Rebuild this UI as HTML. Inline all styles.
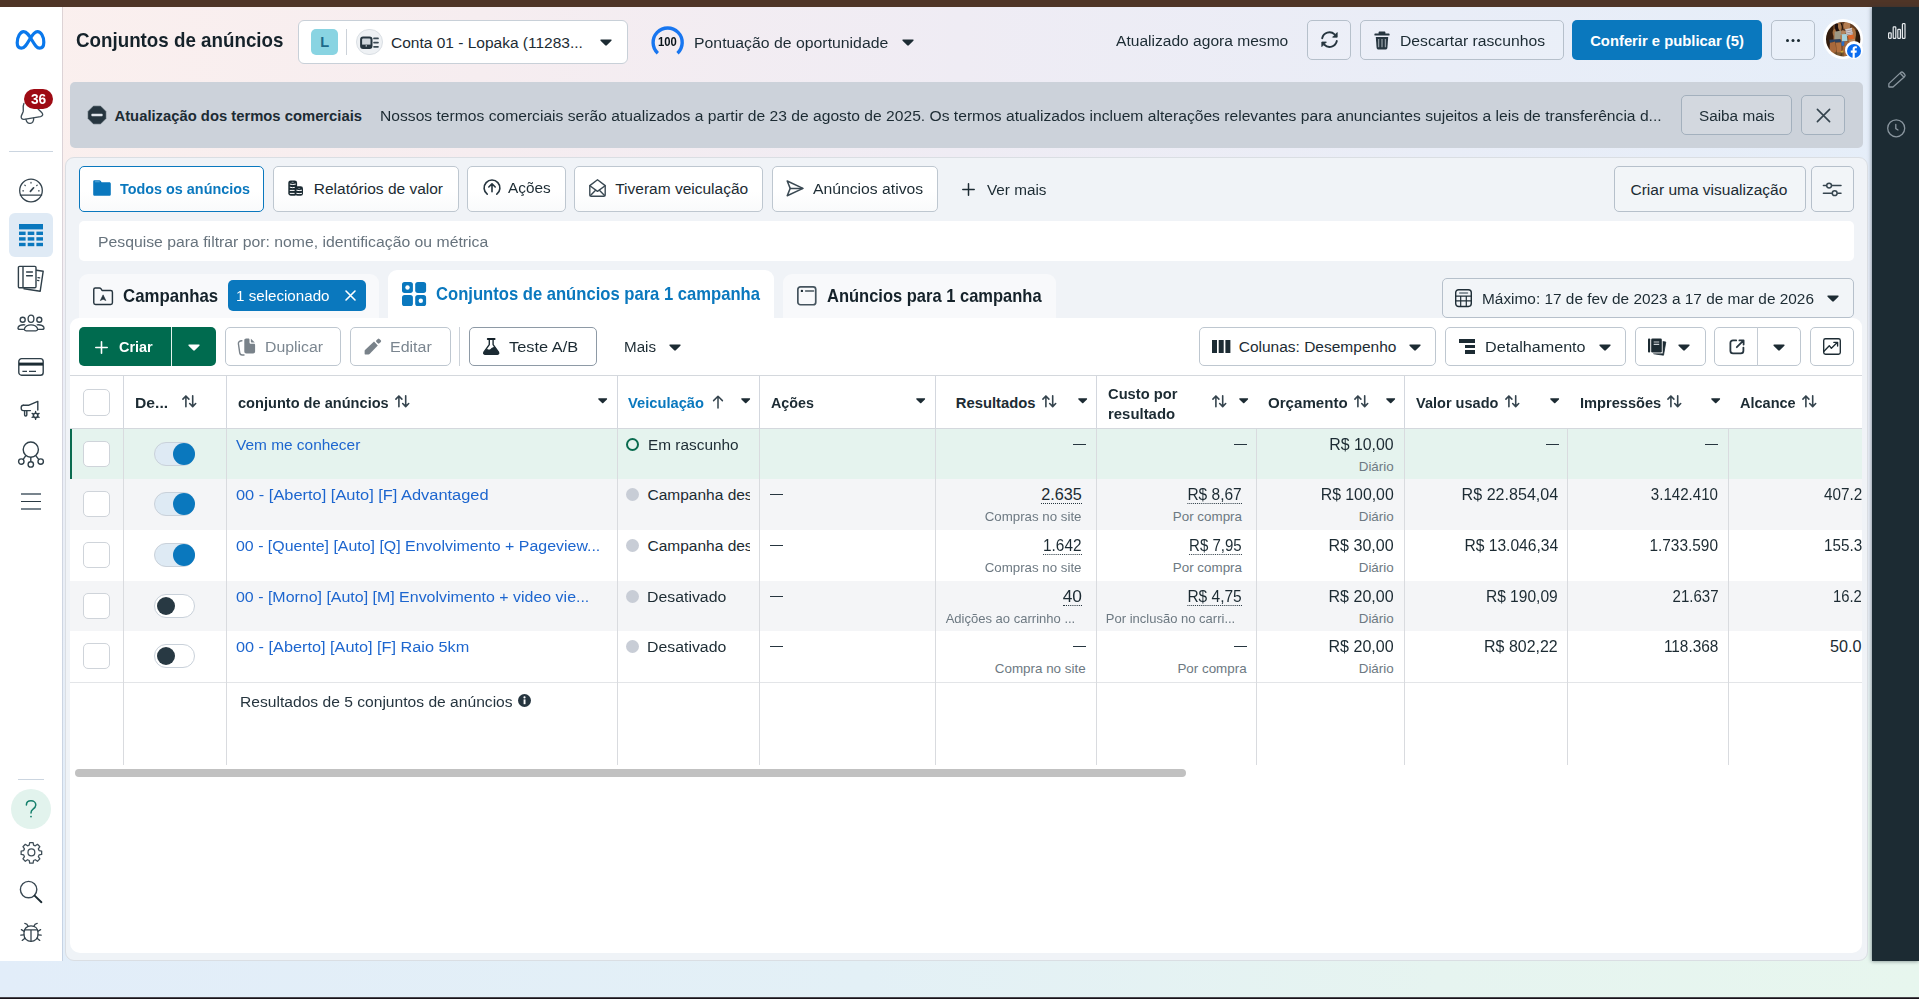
<!DOCTYPE html>
<html lang="pt-BR">
<head>
<meta charset="utf-8">
<title>Conjuntos de anúncios</title>
<style>
*{box-sizing:border-box;margin:0;padding:0}
html,body{width:1919px;height:999px;overflow:hidden}
body{font-family:"Liberation Sans",sans-serif;color:#1c2b33;font-size:15.5px;position:relative;background:#e9eef6}
.abs{position:absolute}
#bgtop{position:absolute;left:0;top:0;width:1919px;height:340px;background:linear-gradient(90deg,#fbf0ee 0%,#f6edf0 25%,#efecf4 50%,#e9edf7 75%,#e5eef9 100%)}
#bgbot{position:absolute;left:0;top:340px;width:1919px;height:659px;background:linear-gradient(90deg,#e2edf9 0%,#e3f0f6 45%,#e6f4f0 75%,#e7f6ee 100%)}
#bgmid{position:absolute;left:0;top:160px;width:1919px;height:640px;background:linear-gradient(180deg,rgba(233,238,246,0) 0%,#ebeef7 30%,#e9eef6 70%,rgba(233,238,246,0) 100%)}
#topbar{position:absolute;left:0;top:0;width:1919px;height:7px;background:#4f3527}
#botline{position:absolute;left:0;top:997px;width:1919px;height:2px;background:linear-gradient(180deg,#6b6a70 0%,#18131a 60%)}
#side{position:absolute;left:0;top:7px;width:62px;height:954px;background:#fff}
#sideb{position:absolute;left:62px;top:7px;width:1px;height:954px;background:linear-gradient(180deg,#ddd3d5 0%,#d9d3da 30%,#cfd6e2 60%,#c6d3e4 100%)}
#rpanel{position:absolute;left:1872px;top:7px;width:47px;height:954px;background:#1c2b33;box-shadow:-1px 0 4px rgba(40,60,80,.35),0 1px 3px rgba(0,0,0,.18)}
.t{position:absolute;white-space:nowrap;line-height:1}
.b{font-weight:700}
.btn{position:absolute;border:1px solid #b6c0cb;border-radius:5px;background:rgba(255,255,255,.12)}
.btnw{position:absolute;border:1px solid #bec7d0;border-radius:5px;background:#fff}
svg{position:absolute;overflow:visible}
.vl{position:absolute;width:1px;background:#d9dce0}
.cb{position:absolute;width:27px;height:27px;border:1px solid #cfd4da;border-radius:5px;background:#fff}
</style>
</head>
<body>
<div id="bgtop"></div><div id="bgbot"></div><div id="bgmid"></div>
<div id="topbar"></div>
<div id="side"></div><div id="sideb"></div>
<div id="rpanel"></div>
<div id="botline"></div>
<!-- SIDEBAR ICONS -->
<div id="sideicons">
<svg style="left:14px;top:29px" width="33" height="22" viewBox="0 0 33 22"><path d="M3.2 13.8 C3.2 8 6.2 2.6 9.6 2.6 C13.2 2.6 15.6 7.2 18.6 12.2 C21 16.2 22.8 19.2 25.6 19.2 C28.4 19.2 29.8 16.8 29.8 13.2 C29.8 7.6 27 2.6 23.4 2.6 C20.4 2.6 18.2 6 15.4 10.8 C12.6 15.6 10.6 19.2 7.4 19.2 C4.6 19.2 3.2 17 3.2 13.8 Z" fill="none" stroke="#0a78ec" stroke-width="3.2" stroke-linejoin="round"/></svg>
<!-- bell -->
<svg style="left:20px;top:100px" width="24" height="24" viewBox="0 0 24 24" fill="none" stroke="#3d4c56" stroke-width="1.35" stroke-linejoin="round" stroke-linecap="round"><path d="M3.9 3.5 C2.6 6.5 3.6 9 3.2 11.4 C2.8 13.4 1.4 15 1.2 16.6 C1 18.6 2.4 19.6 4 19.4 L20.6 16.6 C22.6 16.2 23.2 14.6 22.2 13.2 C20.8 11.4 19 10 17.6 8.6"/><path d="M5.9 19.4 C6.6 22 8.4 23.6 10.2 23.4 C12.4 23.2 14 21.2 13.6 18.2"/></svg>
<div class="abs" style="left:24px;top:89px;width:29px;height:20px;border-radius:10px;background:#9e0b14"></div>
<div class="t" style="top:92px;font-size:14.3px;color:#fff;font-weight:700;left:30.52px;transform:scaleX(0.9556);transform-origin:0 0;">36</div>
<div class="abs" style="left:9px;top:151px;width:44px;height:1px;background:#cbd5e0"></div>
<!-- gauge -->
<svg style="left:19px;top:178px" width="24" height="25" viewBox="0 0 24 25" fill="none" stroke="#34434d" stroke-width="1.3" stroke-linecap="round"><circle cx="12" cy="12.5" r="11.3"/><path d="M1.4 17.2 H22.6"/><path d="M11.4 13.4 L14.6 9.8" stroke-width="1.7"/><path d="M12 4.4v.7M5.8 7.2l.5.5M18.2 7.2l-.5.5M3.8 12.8h.7M19.5 12.8h.7" stroke-width="1.2"/></svg>
<!-- active table -->
<div class="abs" style="left:9px;top:213px;width:44px;height:44px;border-radius:6px;background:#dfeaf5"></div>
<svg style="left:19px;top:224px" width="24" height="23" viewBox="0 0 24 23" fill="#0a78be"><rect x="0" y="0" width="24" height="5.4"/><rect x="0" y="7.6" width="6.6" height="3.4"/><rect x="8.7" y="7.6" width="6.6" height="3.4"/><rect x="17.4" y="7.6" width="6.6" height="3.4"/><rect x="0" y="13.2" width="6.6" height="3.4"/><rect x="8.7" y="13.2" width="6.6" height="3.4"/><rect x="17.4" y="13.2" width="6.6" height="3.4"/><rect x="0" y="18.8" width="6.6" height="3.4"/><rect x="8.7" y="18.8" width="6.6" height="3.4"/><rect x="17.4" y="18.8" width="6.6" height="3.4"/></svg>
<!-- pages -->
<svg style="left:17px;top:265px" width="28" height="28" viewBox="0 0 28 28" fill="none" stroke="#2f3f49" stroke-width="1.4" stroke-linejoin="round" stroke-linecap="round"><path d="M19.5 5.2 L26.2 6.2 L23.2 26.2 L7 23.8"/><rect x="1.4" y="1.4" width="17.6" height="21.4" rx="1.2"/><path d="M6 1.6V22.6"/><path d="M9.6 7H15.4M9.6 10.8H15.4"/><path d="M21 12.6l1.6.3M20.6 15.4l1.2.2"/></svg>
<!-- people -->
<svg style="left:17px;top:313.8px" width="28" height="18" viewBox="0 0 28 18" fill="none" stroke="#34434d" stroke-width="1.35" stroke-linejoin="round" stroke-linecap="round"><ellipse cx="14" cy="4.7" rx="2.9" ry="3.6"/><circle cx="5.7" cy="5.7" r="2.5"/><circle cx="22.3" cy="5.7" r="2.5"/><path d="M9.2 16.8 C7.6 16.8 7 15.6 7.6 14.2 C8.6 11.8 11.2 10.8 14 10.8 C16.8 10.8 19.4 11.8 20.4 14.2 C21 15.6 20.4 16.8 18.8 16.8 Z"/><path d="M6.4 15.4 H2.8 C1.2 15.4 .6 14.4 1.2 13.2 C2.2 11.4 4.4 10.6 7.8 10.8"/><path d="M21.6 15.4 H25.2 C26.8 15.4 27.4 14.4 26.8 13.2 C25.8 11.4 23.6 10.6 20.2 10.8"/></svg>
<!-- card -->
<svg style="left:18px;top:357px" width="26" height="20" viewBox="0 0 26 20" fill="none" stroke="#2f3f49" stroke-width="1.4"><rect x=".8" y="1.6" width="24.4" height="16.6" rx="2.8"/><rect x="1" y="5.6" width="24" height="3" fill="#1c2b33" stroke="none"/><path d="M4.4 14.4H9M11 14.4H18" stroke-width="1.3"/></svg>
<!-- megaphone -->
<svg style="left:20px;top:399px" width="22" height="22" viewBox="0 0 22 22" fill="none" stroke="#2f3f49" stroke-width="1.4" stroke-linejoin="round" stroke-linecap="round"><path d="M3.4 6.2 L9 6.2 L17.8 2.4 L17.8 11"/><path d="M10.4 11.6 L3.4 11.6 C1.6 11.6 1.2 10.4 1.2 8.9 C1.2 7.4 1.6 6.2 3.4 6.2"/><path d="M4.6 11.8 L4.6 16 C4.6 17.4 6.8 17.4 6.8 16 L6.8 11.8"/><circle cx="15.6" cy="16.4" r="2.2" stroke-width="1.6"/><path d="M15.6 12.4v1.4M15.6 19v1.4M12.1 14.4l1.2.7M17.9 17.7l1.2.7M12.1 18.4l1.2-.7M17.9 15.1l1.2-.7" stroke-width="1.3"/></svg>
<!-- network -->
<svg style="left:17px;top:440px" width="28" height="30" viewBox="0 0 28 30" fill="none" stroke="#2f3f49" stroke-width="1.4"><circle cx="13.8" cy="9.6" r="7.6"/><circle cx="4.3" cy="21.6" r="2.7"/><circle cx="13.8" cy="24.4" r="2.7"/><circle cx="23.7" cy="21.6" r="2.7"/><path d="M8.8 15.6 L6.2 19.4M13.8 17.2V21.6M18.8 15.6L21.6 19.4"/></svg>
<!-- hamburger -->
<div class="abs" style="left:21px;top:493px;width:20px;height:2px;background:#78848d"></div>
<div class="abs" style="left:21px;top:501px;width:20px;height:1px;background:#2a3943"></div>
<div class="abs" style="left:21px;top:508px;width:20px;height:2px;background:#78848d"></div>
<!-- bottom -->
<div class="abs" style="left:18px;top:779px;width:26px;height:1px;background:#cbd5e0"></div>
<div class="abs" style="left:11px;top:789px;width:40px;height:40px;border-radius:20px;background:#e2f3ed"></div>
<svg style="left:11px;top:789px" width="40" height="40" viewBox="0 0 40 40" fill="none" stroke="#15806c" stroke-width="1.5" stroke-linecap="round"><path d="M15.4 16 C15.4 13.4 17.4 11.8 20 11.8 C22.8 11.8 24.8 13.6 24.8 16 C24.8 18.2 23.4 19.2 21.8 20.3 C20.4 21.3 20 22.2 20 24"/><circle cx="20" cy="27.6" r=".9" fill="#15806c" stroke="none"/></svg>
<!-- gear -->
<svg style="left:19.6px;top:841.4px" width="22.8" height="22.8" viewBox="0 0 24 24" fill="none" stroke="#3f4e58" stroke-width="1.35" stroke-linejoin="round"><circle cx="12" cy="12" r="3.6"/><path d="M10.2 1.6h3.6l.5 2.7 1.8.8 2.3-1.6 2.5 2.5-1.6 2.3.8 1.8 2.7.5v3.6l-2.7.5-.8 1.8 1.6 2.3-2.5 2.5-2.3-1.6-1.8.8-.5 2.7h-3.6l-.5-2.7-1.8-.8-2.3 1.6-2.5-2.5 1.6-2.3-.8-1.8-2.7-.5v-3.6l2.7-.5.8-1.8-1.6-2.3 2.5-2.5 2.3 1.6 1.8-.8z"/></svg>
<!-- search -->
<svg style="left:19px;top:880px" width="24" height="24" viewBox="0 0 24 24" fill="none" stroke="#3a4953" stroke-width="1.4" stroke-linecap="round"><circle cx="9.6" cy="9.6" r="8.2"/><path d="M15.6 15.6L22.4 22.2" stroke="#1c2b33" stroke-width="1.9"/></svg>
<!-- bug -->
<svg style="left:20px;top:921px" width="22" height="22" viewBox="0 0 22 22" fill="none" stroke="#34434d" stroke-width="1.3" stroke-linecap="round" stroke-linejoin="round"><path d="M4 11.8 C4 7.6 6.9 4.8 11 4.8 C15.1 4.8 18 7.6 18 11.8 L18 13.4 C18 17.4 15.1 20.4 11 20.4 C6.9 20.4 4 17.4 4 13.4Z"/><path d="M4.6 8.8H17.4M11 8.8V20.2"/><path d="M8 5.2 C7.6 3.6 6.4 2.6 4.8 2.4M14 5.2 C14.4 3.6 15.6 2.6 17.2 2.4M3.9 10.2L1.4 8.6M3.9 13.8L.8 14.2M4.9 17.2L2.2 19.4M18.1 10.2l2.5-1.6M18.1 13.8l3.1.4M17.1 17.2l2.7 2.2"/></svg>
</div>

<!-- RIGHT PANEL ICONS -->
<div id="ricons">
<svg style="left:1888px;top:23px" width="18" height="16" viewBox="0 0 18 16" fill="none" stroke="#e6eaed" stroke-width="1.2"><rect x=".6" y="9.8" width="2.6" height="5.6" rx=".7"/><rect x="5.2" y="3.8" width="2.6" height="11.6" rx=".7"/><rect x="9.8" y="6.4" width="2.6" height="9" rx=".7"/><rect x="14.4" y=".6" width="2.6" height="14.8" rx=".7"/></svg>
<svg style="left:1887.5px;top:70.5px" width="18" height="17" viewBox="0 0 18 17" fill="none" stroke="#8a969f" stroke-width="1.3" stroke-linejoin="round"><path d="M.9 12.6 L12.6 1.6 C13.4 .9 14.4 .9 15.2 1.7 L16.6 3.2 C17.3 4 17.3 5 16.5 5.7 L5 16 H1.4 C1 16 .8 15.8 .8 15.4Z"/><path d="M12.2 2.2L16 6.2"/></svg>
<svg style="left:1887px;top:119px" width="19" height="19" viewBox="0 0 19 19" fill="none" stroke="#8a969f" stroke-width="1.3" stroke-linecap="round"><circle cx="9.2" cy="9.3" r="8.5"/><path d="M8.8 5.4V9.6L11 11"/></svg>
</div>

<!-- HEADER -->
<div id="header">
<div class="t" style="top:29px;font-size:21px;color:#15222a;font-weight:700;left:76.05px;transform:scaleX(0.8937);transform-origin:0 0;">Conjuntos de anúncios</div>
<div class="btnw" style="left:298px;top:20px;width:330px;height:44px;border-color:#c8d0d8;border-radius:6px"></div>
<div class="abs" style="left:311px;top:29px;width:27px;height:26px;border-radius:5px;background:#89d4e2"></div>
<div class="t" style="top:35px;font-size:14.6px;color:#1d6a8a;font-weight:700;left:320.20px;">L</div>
<div class="abs" style="left:346px;top:29px;width:1px;height:26px;background:#ccd2d9"></div>
<div class="abs" style="left:356px;top:29px;width:27px;height:26px;border-radius:13px;background:#eef1f4;border:1px solid #dadfe4"></div>
<svg style="left:360px;top:36px" width="19" height="14" viewBox="0 0 19 14"><rect x="1.1" y="1.4" width="10.4" height="10.6" rx="2" fill="#cfd6dc" stroke="#26353f" stroke-width="2"/><rect x="1.4" y="8.6" width="9.8" height="2.6" fill="#26353f"/><rect x="5.6" y="9.3" width="1.4" height="1.2" fill="#cfd6dc"/><path d="M14 2.4H18M14 6.6H18M14 10.8H18" stroke="#3a4953" stroke-width="1.7" stroke-linecap="round"/></svg>
<div class="t" style="top:35px;font-size:15.5px;color:#1c2b33;left:391.00px;">Conta 01 - Lopaka (11283...</div><svg style="left:599.5px;top:39.0px" width="12" height="7" viewBox="0 0 12 7"><path d="M1.2 0.4 H10.8 C11.6 0.4 11.9 1.1 11.4 1.7 L6.8 6.3 C6.4 6.8 5.6 6.8 5.2 6.3 L0.6 1.7 C0.1 1.1 0.4 0.4 1.2 0.4Z" fill="#1c2b33"/></svg>
<svg style="left:651px;top:26.3px" width="34" height="32" viewBox="0 0 34 32"><path d="M6.8 27.2 A14.55 14.55 0 1 1 26.5 27.2" fill="none" stroke="#1876f0" stroke-width="3.4"/></svg>
<div class="t" style="top:36px;font-size:12.6px;color:#0a141a;font-weight:700;left:658.15px;transform:scaleX(0.8946);transform-origin:0 0;">100</div><div class="t" style="top:35px;font-size:15.5px;color:#1c2b33;left:694.49px;transform:scaleX(1.0201);transform-origin:0 0;">Pontuação de oportunidade</div><svg style="left:902.3px;top:39.0px" width="12" height="7" viewBox="0 0 12 7"><path d="M1.2 0.4 H10.8 C11.6 0.4 11.9 1.1 11.4 1.7 L6.8 6.3 C6.4 6.8 5.6 6.8 5.2 6.3 L0.6 1.7 C0.1 1.1 0.4 0.4 1.2 0.4Z" fill="#1c2b33"/></svg><div class="t" style="top:33px;font-size:15.5px;color:#1c2b33;left:1116.20px;transform:scaleX(1.0048);transform-origin:0 0;">Atualizado agora mesmo</div>
<div class="btn" style="left:1307px;top:20.3px;width:44px;height:39.7px"></div>
<svg style="left:1320px;top:30.2px" width="19" height="19" viewBox="0 0 19 19"><g fill="none" stroke="#26353f" stroke-width="1.9" stroke-linecap="round"><path d="M2.2 8.2 A7.4 7.4 0 0 1 14.6 4.4"/><path d="M16.8 11 A7.4 7.4 0 0 1 4.4 14.8"/></g><path d="M17.2 2.6 V7.2 H12.6 Z" fill="#26353f" stroke="#26353f" stroke-width=".8" stroke-linejoin="round"/><path d="M1.8 16.6 V12 H6.4 Z" fill="#26353f" stroke="#26353f" stroke-width=".8" stroke-linejoin="round"/></svg>
<div class="btn" style="left:1360px;top:20.3px;width:204px;height:39.7px"></div>
<svg style="left:1374px;top:31px" width="16" height="19" viewBox="0 0 16 19"><path d="M5.6 0.6 H10.4 C11 0.6 11.4 1 11.4 1.6 V2.4 H14.6 C15.2 2.4 15.6 2.8 15.6 3.4 V4 C15.6 4.4 15.3 4.6 15 4.6 H1 C.7 4.6 .4 4.4 .4 4 V3.4 C.4 2.8 .8 2.4 1.4 2.4 H4.6 V1.6 C4.6 1 5 .6 5.6 .6Z" fill="#26353f"/><path d="M1.8 6 H14.2 L13.4 16.8 C13.3 17.9 12.5 18.6 11.4 18.6 H4.6 C3.5 18.6 2.7 17.9 2.6 16.8Z" fill="#26353f"/><path d="M4.6 8V16.2M8 8V16.2M11.4 8V16.2" stroke="#909aa2" stroke-width="1.3"/></svg>
<div class="t" style="top:33px;font-size:15.5px;color:#1c2b33;left:1400.19px;transform:scaleX(1.0139);transform-origin:0 0;">Descartar rascunhos</div>
<div class="abs" style="left:1572px;top:20.3px;width:190px;height:39.7px;border-radius:5px;background:#0a78be"></div>
<div class="t" style="top:34px;font-size:14.8px;color:#fff;font-weight:700;left:1590.20px;">Conferir e publicar (5)</div>
<div class="btn" style="left:1771px;top:20.3px;width:43.5px;height:39.7px"></div>
<div class="abs" style="left:1786px;top:39px;width:3px;height:3px;border-radius:2px;background:#1c2b33;box-shadow:5.5px 0 0 #1c2b33,11px 0 0 #1c2b33"></div>
<!-- avatar -->
<div class="abs" style="left:1823.3px;top:19.3px;width:39.4px;height:39.4px;border-radius:20px;background:#fff"></div>
<svg style="left:1825.8px;top:21.8px" width="34.4" height="34.4" viewBox="0 0 34 34">
<defs><filter id="avb" x="-10%" y="-10%" width="120%" height="120%"><feGaussianBlur stdDeviation=".45"/></filter><clipPath id="avc"><circle cx="17" cy="17" r="17"/></clipPath>
<radialGradient id="avg" cx="50%" cy="45%" r="60%"><stop offset="0" stop-color="#9a6238"/><stop offset=".6" stop-color="#6a4022"/><stop offset="1" stop-color="#24160c"/></radialGradient></defs>
<g clip-path="url(#avc)"><g filter="url(#avb)">
<rect x="-2" y="-2" width="38" height="38" fill="url(#avg)"/>
<rect x="0" y="0" width="7" height="34" fill="#2a190d" opacity=".85"/>
<rect x="29" y="8" width="5" height="14" fill="#1d120a" opacity=".8"/>
<!-- left person -->
<path d="M8 14 C6 12 6 9 8 7 L15 6 L16 12 L15 19 L8 19Z" fill="#a56f43"/>
<ellipse cx="12.4" cy="4.5" rx="3.2" ry="3.6" fill="#a8744a"/>
<path d="M9 1 C8 5 9.5 9 11 10.5 L14.5 9.5 C12 8 11.5 5 12 2 Z" fill="#1c110a"/>
<path d="M14.5 1.5 C16 4 16 7 15 9.5 L16.5 8 C17 5 16.5 3 15.5 1Z" fill="#1c110a"/>
<path d="M8.6 9.6 L15 8.4 L15.6 16.6 L8.4 17.4 Z" fill="#9d9885"/>
<path d="M3.4 17.6 L14.6 16.8 L15 20 L9.4 20.4 L8.8 19.4 L3.8 21Z" fill="#2c4262"/>
<path d="M4 20.6 L8.8 19.6 L10.2 27 L9 34 L4.4 33 C3.4 28 3.4 24 4 20.6Z" fill="#a8683a"/>
<path d="M9.6 20.6 L14.6 20.2 L15.4 27 L14 34 L10.4 34 C10.8 29 10.4 24 9.6 20.6Z" fill="#b2713f"/>
<!-- right person -->
<ellipse cx="20.6" cy="3.6" rx="3.4" ry="3.6" fill="#b47c4f"/>
<path d="M18.4 7.4 L25.6 5.6 L27 12.4 L20.6 13.6Z" fill="#d8d2d2"/>
<path d="M19 9.2 L26 7.6 M19.6 11 L26.4 9.6 M20.2 12.6 L26.8 11.4" stroke="#8e7f86" stroke-width=".7"/>
<path d="M25.4 5.2 C28.4 6 30 9 29.6 13 L28.6 18.4 L26 17.6 L26.8 12Z" fill="#a9703f"/>
<path d="M21.6 13.4 L27.2 12.4 L27.6 16.6 L22.4 17.6Z" fill="#dc6326"/>
<path d="M22 17.6 L28.6 16.6 L29 19 L23 20.4Z" fill="#b98a62"/>
<!-- child -->
<ellipse cx="17.2" cy="9.6" rx="2.3" ry="2.5" fill="#b4835c"/>
<path d="M15 8.6 C15.2 6.8 19 6.6 19.4 8.8 C18 8 16.4 8 15 8.6Z" fill="#2a1a10"/>
<path d="M15.4 12.2 L20.4 11.8 L21.2 18.8 L15.8 19.2Z" fill="#a6d2dc"/>
<path d="M14 13.4 L15.6 12.6 L15.8 17.4 L14.4 17.2Z" fill="#b27a4c"/>
<path d="M15.2 19.2 L18.4 19 L18.2 23.6 L15.4 23.6Z" fill="#2c6ec6"/>
<path d="M18.4 19.4 L23.6 19.6 L20.4 34 L16 34 L16.6 24 L18.2 23.6Z" fill="#a86a3c"/>
<path d="M14.6 28.6 L17 28.2 L17 30.6 L14.8 30.8Z" fill="#c8a238"/>
<rect x="8" y="30" width="10" height="4" fill="#5a4a2c" opacity=".6"/>
</g></g></svg>
<div class="abs" style="left:1845px;top:41px;width:18px;height:18px;border-radius:9px;background:#fff"></div>
<svg style="left:1847.1px;top:43.6px" width="14" height="14" viewBox="0 0 14 14"><circle cx="7" cy="7" r="7" fill="#0a6cf0"/><path d="M7.75 14V8.7h1.75l.3-2.1H7.75V5.3c0-.65.3-1.05 1.1-1.05h1.05V2.4C9.6 2.3 8.95 2.2 8.3 2.2 6.65 2.2 5.6 3.2 5.6 5v1.6H3.8v2.1h1.8V14z" fill="#fff"/></svg>
</div>

<!-- BANNER -->
<div id="banner" class="abs" style="left:70px;top:82px;width:1793px;height:66px;background:#ccd2da;border-radius:5px"></div>
<svg style="left:88px;top:106px" width="18" height="18" viewBox="0 0 18 18"><path d="M5.4 0.2 H12.6 L17.8 5.4 V12.6 L12.6 17.8 H5.4 L0.2 12.6 V5.4Z" fill="#26353f" stroke="#26353f" stroke-width=".6" stroke-linejoin="round"/><rect x="3.4" y="7.8" width="11.2" height="2.4" rx=".6" fill="#dfe4ea"/></svg>
<div class="t" style="top:109px;font-size:14.8px;color:#1c2b33;font-weight:700;left:114.50px;">Atualização dos termos comerciais</div><div class="t" style="top:108px;font-size:15.5px;color:#1c2b33;left:379.50px;transform:scaleX(1.0092);transform-origin:0 0;">Nossos termos comerciais serão atualizados a partir de 23 de agosto de 2025. Os termos atualizados incluem alterações relevantes para anunciantes sujeitos a leis de transferência d...</div>
<div class="btn" style="left:1681.3px;top:95px;width:110.4px;height:39.6px;border-color:#a3b0bd;background:rgba(255,255,255,.14)"></div>
<div class="t" style="top:108px;font-size:15.5px;color:#1c2b33;left:1698.81px;transform:scaleX(0.9871);transform-origin:0 0;">Saiba mais</div>
<div class="btn" style="left:1801.2px;top:95px;width:43.8px;height:39.6px;border-color:#a3b0bd;background:rgba(255,255,255,.14)"></div>
<svg style="left:1815.6px;top:107.6px" width="15" height="15" viewBox="0 0 15 15" stroke="#34434d" stroke-width="1.6" stroke-linecap="round"><path d="M1.4 1.4L13.6 13.6M13.6 1.4L1.4 13.6"/></svg>

<!-- CARD -->
<div id="card" class="abs" style="left:65px;top:157px;width:1803px;height:804px;background:rgba(239,243,247,.97);border:1px solid #dadee3;border-radius:9px"></div>
<!-- view tabs -->
<div class="btnw" style="left:79px;top:166px;width:185px;height:45.6px;border-color:#0a78be;border-radius:5px;background:linear-gradient(180deg,#fff 55%,#f9fafb 100%)"></div>
<svg style="left:93px;top:180px" width="18" height="16" viewBox="0 0 18 16"><path d="M1.6 0.2 H6.4 C7 0.2 7.4 0.4 7.8 0.9 L8.6 2.2 H16.2 C17.2 2.2 17.8 2.8 17.8 3.8 V14.2 C17.8 15.2 17.2 15.8 16.2 15.8 H1.8 C.8 15.8 .2 15.2 .2 14.2 V1.6 C.2 .7 .8 .2 1.6 .2Z" fill="#0a78be"/><rect x="1.8" y="1.2" width="5" height="1.1" rx=".5" fill="#5aa6d6"/></svg>
<div class="t" style="top:182px;font-size:14.8px;color:#0a78be;font-weight:700;left:119.51px;transform:scaleX(0.9721);transform-origin:0 0;">Todos os anúncios</div>
<div class="btnw" style="left:273px;top:166px;width:186px;height:45.6px;background:linear-gradient(180deg,#fff 55%,#f9fafb 100%)"></div>
<svg style="left:288px;top:180px" width="16" height="16" viewBox="0 0 16 16"><rect x=".3" y=".4" width="8.8" height="15.3" rx="2.4" fill="#1c2b33"/><rect x="7.2" y="6.3" width="7.8" height="9.4" rx="2.3" fill="#1c2b33"/><g stroke="#fff" stroke-width="1" stroke-linecap="round" fill="none"><path d="M2.2 4.2 Q4.7 5 7.4 4.2"/><path d="M2.2 7.3 Q4.2 8 6.4 7.5"/><path d="M2.2 10.4 H6.2"/><path d="M2.2 13.4 H6.2"/><path d="M8.8 10.3 Q11.1 11 13.6 10.3"/><path d="M8.8 13.4 Q11.1 13.9 13.6 13.4"/></g><ellipse cx="4.7" cy="2.3" rx="1.5" ry=".45" fill="#9aa5ad"/><ellipse cx="11.1" cy="8.4" rx="1.3" ry=".4" fill="#9aa5ad"/></svg>
<div class="t" style="top:181px;font-size:15.5px;color:#1c2b33;left:313.80px;">Relatórios de valor</div>
<div class="btnw" style="left:467px;top:166px;width:98.5px;height:45.6px;background:linear-gradient(180deg,#fff 55%,#f9fafb 100%)"></div>
<svg style="left:483px;top:179px" width="18" height="17" viewBox="0 0 18 17" fill="none" stroke="#26353f" stroke-width="1.6" stroke-linecap="round" stroke-linejoin="round"><path d="M4.2 15.2 A7.9 7.9 0 1 1 13.8 15.2"/><path d="M9 12.8V5M5.8 8L9 4.8L12.2 8"/></svg>
<div class="t" style="top:180px;font-size:15.5px;color:#1c2b33;left:507.80px;transform:scaleX(0.9909);transform-origin:0 0;">Ações</div>
<div class="btnw" style="left:574px;top:166px;width:188.5px;height:45.6px;background:linear-gradient(180deg,#fff 55%,#f9fafb 100%)"></div>
<svg style="left:589px;top:179px" width="17" height="18" viewBox="0 0 17 18" fill="none" stroke="#3a4953" stroke-width="1.4" stroke-linejoin="round" stroke-linecap="round"><path d="M.8 6.6 L8.5 .8 L16.2 6.6 V15.8 C16.2 16.8 15.8 17.2 14.8 17.2 H2.2 C1.2 17.2 .8 16.8 .8 15.8Z"/><path d="M.9 6.8 L8.5 12.4 L16.1 6.8"/><path d="M1.2 16.8 L6.6 11.2M15.8 16.8 L10.4 11.2"/></svg>
<div class="t" style="top:181px;font-size:15.5px;color:#1c2b33;left:615.20px;">Tiveram veiculação</div>
<div class="btnw" style="left:772px;top:166px;width:165.5px;height:45.6px;background:linear-gradient(180deg,#fff 55%,#f9fafb 100%)"></div>
<svg style="left:786px;top:180px" width="18" height="17" viewBox="0 0 18 17" fill="none" stroke="#3a4953" stroke-width="1.5" stroke-linejoin="round" stroke-linecap="round"><path d="M1.2 1 L17 8.4 L1.2 15.8 L4.2 8.4Z"/><path d="M4.4 8.4H16.4"/></svg>
<div class="t" style="top:181px;font-size:15.5px;color:#1c2b33;left:812.79px;transform:scaleX(1.0151);transform-origin:0 0;">Anúncios ativos</div>
<svg style="left:962px;top:183px" width="13" height="13" viewBox="0 0 13 13" stroke="#1c2b33" stroke-width="1.5" stroke-linecap="round"><path d="M6.5 .8V12.2M.8 6.5H12.2"/></svg>
<div class="t" style="top:182px;font-size:15.5px;color:#1c2b33;left:986.81px;transform:scaleX(0.9865);transform-origin:0 0;">Ver mais</div>
<div class="btn" style="left:1613.5px;top:166px;width:192.5px;height:46px;background:rgba(255,255,255,.18)"></div>
<div class="t" style="top:182px;font-size:15.5px;color:#1c2b33;left:1630.50px;">Criar uma visualização</div>
<div class="btn" style="left:1811px;top:166px;width:43px;height:46px;background:rgba(255,255,255,.18)"></div>
<svg style="left:1823px;top:181px" width="19" height="16" viewBox="0 0 19 16" fill="none" stroke="#36454f" stroke-width="1.5" stroke-linecap="round"><path d="M.4 4.6H3M9.2 4.6H18M.4 12.2H8.6M14.8 12.2H18"/><circle cx="6.1" cy="4.6" r="2.4"/><circle cx="11.7" cy="12.2" r="2.4"/></svg>
<!-- search -->
<div class="abs" style="left:79px;top:221px;width:1775px;height:40px;background:#fff;border-radius:5px"></div>
<div class="t" style="top:234px;font-size:15.5px;color:#67737d;left:97.79px;transform:scaleX(1.0178);transform-origin:0 0;">Pesquise para filtrar por: nome, identificação ou métrica</div>
<!-- level tabs -->
<div class="abs" style="left:79px;top:274px;width:299.5px;height:46px;background:#f8f9fb;border-radius:9px 9px 0 0"></div>
<svg style="left:92.6px;top:286.6px" width="20.2" height="18.6" viewBox="0 0 21 19" fill="none" stroke="#26353f" stroke-width="1.5" stroke-linejoin="round"><path d="M2.4 .8 H6.6 C7.4 .8 7.8 1 8.2 1.6 L9.4 3.4 H18.4 C19.6 3.4 20.2 4 20.2 5.2 V16.2 C20.2 17.4 19.6 18 18.4 18 H2.6 C1.4 18 .8 17.4 .8 16.2 V2.4 C.8 1.4 1.4 .8 2.4 .8Z"/><path d="M10.5 8 L13.4 14 L10.5 12.6 L7.6 14Z" fill="#26353f" stroke-width=".6"/></svg>
<div class="t" style="top:288px;font-size:17.8px;color:#15222a;font-weight:700;left:123.33px;transform:scaleX(0.9445);transform-origin:0 0;">Campanhas</div>
<div class="abs" style="left:228px;top:280px;width:138px;height:31px;border-radius:5px;background:#0a78be"></div>
<div class="t" style="top:288px;font-size:15.5px;color:#fff;left:236.21px;transform:scaleX(0.9773);transform-origin:0 0;">1 selecionado</div>
<svg style="left:345px;top:290px" width="11" height="11" viewBox="0 0 11 11" stroke="#fff" stroke-width="1.6" stroke-linecap="round"><path d="M1 1L10 10M10 1L1 10"/></svg>
<div class="abs" style="left:388px;top:270px;width:386px;height:50px;background:#fff;border-radius:9px 9px 0 0"></div>
<svg style="left:402px;top:282px" width="25" height="25" viewBox="0 0 25 25"><rect x="0" y="0" width="10.9" height="10.9" rx="2.6" fill="#0a78be"/><circle cx="5.5" cy="5.5" r="2.2" fill="#fff"/><rect x="13.2" y="0" width="10.9" height="10.9" rx="2.6" fill="#0a78be"/><rect x="0" y="13.1" width="10.9" height="10.9" rx="2.6" fill="#0a78be"/><rect x="13.2" y="13.1" width="10.9" height="10.9" rx="2.6" fill="#0a78be"/><circle cx="18.8" cy="18.8" r="2.2" fill="#fff"/></svg>
<div class="t" style="top:286px;font-size:17.8px;color:#0a78be;font-weight:700;left:436.23px;transform:scaleX(0.9342);transform-origin:0 0;">Conjuntos de anúncios para 1 campanha</div>
<div class="abs" style="left:782.5px;top:274px;width:273.5px;height:46px;background:#f8f9fb;border-radius:9px 9px 0 0"></div>
<svg style="left:797.2px;top:286.2px" width="20" height="20" viewBox="0 0 20 20" fill="none" stroke="#45545e" stroke-width="1.7"><rect x=".85" y=".85" width="17.9" height="17.9" rx="2.6"/><circle cx="4.9" cy="4.9" r="1.2" fill="#1c2b33" stroke="none"/><path d="M8.6 5H16.6" stroke-width="1.4" stroke-linecap="round"/></svg>
<div class="t" style="top:288px;font-size:17.8px;color:#15222a;font-weight:700;left:827.24px;transform:scaleX(0.9281);transform-origin:0 0;">Anúncios para 1 campanha</div>
<div class="btn" style="left:1442px;top:278px;width:412px;height:40px;background:rgba(255,255,255,.18)"></div>
<svg style="left:1454.9px;top:288.8px" width="17.2" height="18.3" viewBox="0 0 17.2 18.3" fill="none" stroke="#1f2e37" stroke-width="1.4"><rect x=".7" y=".7" width="15.6" height="16.8" rx="2.9"/><path d="M.8 7.2H16.2M.8 11.8H16.2M5.7 7.2V17.4M11.3 7.2V17.4" stroke-width="1.2"/><path d="M4.7 4.1H12.5" stroke="#6a7780" stroke-width="1.5" stroke-linecap="round"/></svg>
<div class="t" style="top:291px;font-size:15.5px;color:#1c2b33;left:1481.80px;transform:scaleX(0.9930);transform-origin:0 0;">Máximo: 17 de fev de 2023 a 17 de mar de 2026</div><svg style="left:1826.5px;top:294.5px" width="12" height="7" viewBox="0 0 12 7"><path d="M1.2 0.4 H10.8 C11.6 0.4 11.9 1.1 11.4 1.7 L6.8 6.3 C6.4 6.8 5.6 6.8 5.2 6.3 L0.6 1.7 C0.1 1.1 0.4 0.4 1.2 0.4Z" fill="#1c2b33"/></svg>
<!-- white panel -->
<div id="panel" class="abs" style="left:70px;top:318px;width:1792px;height:635px;background:#fff;border-radius:9px 9px 10px 10px"></div>
<!-- toolbar -->
<div class="abs" style="left:79px;top:327px;width:137px;height:39px;border-radius:5px;background:#006b4f"></div>
<div class="abs" style="left:171px;top:327px;width:1px;height:39px;background:#e6f3ee"></div>
<svg style="left:94.5px;top:340.5px" width="13" height="13" viewBox="0 0 13 13" stroke="#fff" stroke-width="1.6" stroke-linecap="round"><path d="M6.5 .8V12.2M.8 6.5H12.2"/></svg>
<div class="t" style="top:340px;font-size:14.8px;color:#fff;font-weight:700;left:118.81px;transform:scaleX(0.9755);transform-origin:0 0;">Criar</div><svg style="left:187.7px;top:343.5px" width="12" height="7" viewBox="0 0 12 7"><path d="M1.2 0.4 H10.8 C11.6 0.4 11.9 1.1 11.4 1.7 L6.8 6.3 C6.4 6.8 5.6 6.8 5.2 6.3 L0.6 1.7 C0.1 1.1 0.4 0.4 1.2 0.4Z" fill="#fff"/></svg>
<div class="btnw" style="left:225px;top:327px;width:115.5px;height:39px"></div>
<svg style="left:238px;top:337.5px" width="18" height="18" viewBox="0 0 18 18"><path d="M3.9 2.8 C1.6 3 .2 3.8 .4 5.6 L1.7 14.6 C1.9 16.2 2.8 17 4.2 17 H6" fill="none" stroke="#79828a" stroke-width="1.4" stroke-linecap="round"/><path d="M8.1 .4 H10.3 C11 .4 11.5 .9 11.5 1.6 V4.2 C11.5 5.2 12.1 5.8 13.1 5.8 H15.9 C16.6 5.8 17.1 6.3 17.1 7 V13.4 C17.1 14.6 16.3 15.4 15.1 15.4 H8.3 C7.1 15.4 6.3 14.6 6.3 13.4 V2.2 C6.3 1.1 7 .4 8.1 .4Z" fill="#79828a"/><path d="M12.9 .7 L16.8 4.4 H13.6 C13.2 4.4 12.9 4.1 12.9 3.7Z" fill="#79828a"/></svg>
<div class="t" style="top:339px;font-size:15.5px;color:#7b8690;left:264.99px;transform:scaleX(1.0201);transform-origin:0 0;">Duplicar</div>
<div class="btnw" style="left:350px;top:327px;width:100.5px;height:39px"></div>
<svg style="left:363.5px;top:337.5px" width="18" height="17" viewBox="0 0 18 17" fill="#79828a"><path d="M10 3.6 L13.8 7.4 L5.6 15.9 C5.3 16.2 5 16.4 4.6 16.4 H1.2 C.8 16.4 .6 16.2 .6 15.8 V12.9 C.6 12.5 .7 12.2 1 11.9Z"/><rect x="12.5" y="1" width="4.2" height="4.2" rx="1.1" transform="rotate(45 14.6 3.1)"/></svg>
<div class="t" style="top:339px;font-size:15.5px;color:#7b8690;left:390.18px;transform:scaleX(1.0321);transform-origin:0 0;">Editar</div>
<div class="abs" style="left:459px;top:327px;width:1px;height:39px;background:#ccd2d9"></div>
<div class="btnw" style="left:469px;top:327px;width:127.5px;height:39px;border-color:#8e9aa6"></div>
<svg style="left:483px;top:338px" width="16.4" height="17" viewBox="0 0 16.4 17"><path d="M4.8 1 H11.6" stroke="#121f27" stroke-width="2" stroke-linecap="round"/><path d="M6.3 1.4 V6.6 L.9 14.2 C.3 15.4 .9 16.4 2.3 16.4 H14.1 C15.5 16.4 16.1 15.4 15.5 14.2 L10.1 6.6 V1.4" fill="none" stroke="#1c2b33" stroke-width="1.4" stroke-linejoin="round"/><path d="M3.9 10.4 C4.6 11.8 6.4 11.9 7.6 10.9 C8.8 9.7 10.4 9.2 11.8 8.8 L15.5 14.2 C16.1 15.4 15.5 16.4 14.1 16.4 H2.3 C.9 16.4 .3 15.4 .9 14.2Z" fill="#1c2b33"/></svg>
<div class="t" style="top:339px;font-size:15.5px;color:#1c2b33;left:508.87px;transform:scaleX(1.0567);transform-origin:0 0;">Teste A/B</div><div class="t" style="top:339px;font-size:15.5px;color:#1c2b33;left:624.11px;transform:scaleX(0.9806);transform-origin:0 0;">Mais</div><svg style="left:669.0px;top:343.5px" width="12" height="7" viewBox="0 0 12 7"><path d="M1.2 0.4 H10.8 C11.6 0.4 11.9 1.1 11.4 1.7 L6.8 6.3 C6.4 6.8 5.6 6.8 5.2 6.3 L0.6 1.7 C0.1 1.1 0.4 0.4 1.2 0.4Z" fill="#1c2b33"/></svg>
<div class="btnw" style="left:1199px;top:327px;width:237px;height:39px"></div>
<div class="abs" style="left:1212px;top:340px;width:4.6px;height:13px;background:#1c2b33;box-shadow:6.7px 0 0 #1c2b33,13.4px 0 0 #1c2b33"></div>
<div class="t" style="top:339px;font-size:15.5px;color:#1c2b33;left:1238.70px;">Colunas: Desempenho</div><svg style="left:1409.0px;top:343.5px" width="12" height="7" viewBox="0 0 12 7"><path d="M1.2 0.4 H10.8 C11.6 0.4 11.9 1.1 11.4 1.7 L6.8 6.3 C6.4 6.8 5.6 6.8 5.2 6.3 L0.6 1.7 C0.1 1.1 0.4 0.4 1.2 0.4Z" fill="#1c2b33"/></svg>
<div class="btnw" style="left:1445px;top:327px;width:181px;height:39px"></div>
<div class="abs" style="left:1459px;top:339.3px;width:16px;height:3.8px;background:#1c2b33"></div>
<div class="abs" style="left:1465px;top:344.7px;width:10px;height:3.8px;background:#1c2b33"></div>
<div class="abs" style="left:1465px;top:350.1px;width:10px;height:3.8px;background:#1c2b33"></div>
<div class="t" style="top:339px;font-size:15.5px;color:#1c2b33;left:1484.88px;transform:scaleX(1.0423);transform-origin:0 0;">Detalhamento</div><svg style="left:1598.8px;top:343.5px" width="12" height="7" viewBox="0 0 12 7"><path d="M1.2 0.4 H10.8 C11.6 0.4 11.9 1.1 11.4 1.7 L6.8 6.3 C6.4 6.8 5.6 6.8 5.2 6.3 L0.6 1.7 C0.1 1.1 0.4 0.4 1.2 0.4Z" fill="#1c2b33"/></svg>
<div class="btnw" style="left:1635px;top:327px;width:71px;height:39px"></div>
<svg style="left:1648px;top:337.5px" width="18.5" height="18" viewBox="0 0 18.5 18"><path d="M8 2.6 L17.8 4 L15.5 17.2 L5.6 15.8Z" fill="#1c2b33" stroke="#1c2b33" stroke-width=".8" stroke-linejoin="round"/><rect x="-.6" y="-.2" width="15.3" height="15.6" fill="#fff"/><rect x="0" y=".4" width="2.2" height="14.1" rx=".9" fill="#1c2b33"/><rect x="3.2" y=".4" width="10.6" height="14.1" rx="1.3" fill="#1c2b33"/><path d="M5.7 4H11.2M5.7 6.4H11.2" stroke="#c9cfd4" stroke-width="1.1"/></svg>
<svg style="left:1677.6px;top:343.5px" width="12" height="7" viewBox="0 0 12 7"><path d="M1.2 0.4 H10.8 C11.6 0.4 11.9 1.1 11.4 1.7 L6.8 6.3 C6.4 6.8 5.6 6.8 5.2 6.3 L0.6 1.7 C0.1 1.1 0.4 0.4 1.2 0.4Z" fill="#1c2b33"/></svg>
<div class="btnw" style="left:1714px;top:327px;width:86.5px;height:39px"></div>
<div class="abs" style="left:1757px;top:327px;width:1px;height:39px;background:#c5ccd4"></div>
<svg style="left:1728.6px;top:338.6px" width="16" height="16" viewBox="0 0 16 16" fill="none" stroke="#26353f" stroke-width="1.8" stroke-linecap="round" stroke-linejoin="round"><path d="M7.2 1.4 H4 C2.4 1.4 1.4 2.4 1.4 4 V11.8 C1.4 13.4 2.4 14.4 4 14.4 H11.8 C13.4 14.4 14.4 13.4 14.4 11.8 V8.6"/><path d="M10.4 1.4 H14.6 V5.6M14.4 1.6 L7.8 8.2"/></svg>
<svg style="left:1773.0px;top:343.5px" width="12" height="7" viewBox="0 0 12 7"><path d="M1.2 0.4 H10.8 C11.6 0.4 11.9 1.1 11.4 1.7 L6.8 6.3 C6.4 6.8 5.6 6.8 5.2 6.3 L0.6 1.7 C0.1 1.1 0.4 0.4 1.2 0.4Z" fill="#1c2b33"/></svg>
<div class="btnw" style="left:1810px;top:327px;width:43.5px;height:39px"></div>
<svg style="left:1823px;top:338px" width="18" height="17" viewBox="0 0 18 17" fill="none" stroke="#1c2b33" stroke-width="1.35" stroke-linecap="round" stroke-linejoin="round"><rect x=".7" y=".7" width="16.6" height="15.5" rx="1.8"/><path d="M1 13.2 L6.3 7.7 L8.4 10.3 L14.2 4.6M10.8 4.3 H14.6 V8"/></svg>
<!-- TABLE -->
<div class="abs" style="left:70px;top:375px;width:1792px;height:1px;background:#d4d8dd"></div>
<div class="abs" style="left:70px;top:428px;width:1792px;height:1px;background:#d4d8dd"></div>
<div class="abs" style="left:70px;top:429px;width:1792px;height:50px;background:#e5f3ee"></div>
<div class="abs" style="left:70px;top:429px;width:2.2px;height:50px;background:#0a6b4f"></div>
<div class="abs" style="left:70px;top:479px;width:1792px;height:51px;background:#f4f5f7"></div>
<div class="abs" style="left:70px;top:581px;width:1792px;height:50px;background:#f4f5f7"></div>
<div class="abs" style="left:70px;top:682px;width:1792px;height:1px;background:#e3e5e8"></div>
<div class="vl" style="left:123.0px;top:376px;height:52px;background:#d3d7de"></div>
<div class="vl" style="left:226.0px;top:376px;height:52px;background:#d3d7de"></div>
<div class="vl" style="left:616.8px;top:376px;height:52px;background:#d3d7de"></div>
<div class="vl" style="left:758.7px;top:376px;height:52px;background:#d3d7de"></div>
<div class="vl" style="left:934.8px;top:376px;height:52px;background:#d3d7de"></div>
<div class="vl" style="left:1095.8px;top:376px;height:52px;background:#d3d7de"></div>
<div class="vl" style="left:1403.5px;top:376px;height:52px;background:#d3d7de"></div>
<div class="vl" style="left:123.0px;top:429px;height:336px;background:#d9dbdf"></div>
<div class="vl" style="left:226.0px;top:429px;height:336px;background:#d9dbdf"></div>
<div class="vl" style="left:616.8px;top:429px;height:336px;background:#d9dbdf"></div>
<div class="vl" style="left:758.7px;top:429px;height:336px;background:#d9dbdf"></div>
<div class="vl" style="left:934.8px;top:429px;height:336px;background:#d9dbdf"></div>
<div class="vl" style="left:1095.8px;top:429px;height:336px;background:#d9dbdf"></div>
<div class="vl" style="left:1255.5px;top:429px;height:336px;background:#d9dbdf"></div>
<div class="vl" style="left:1403.5px;top:429px;height:336px;background:#d9dbdf"></div>
<div class="vl" style="left:1567.3px;top:429px;height:336px;background:#d9dbdf"></div>
<div class="vl" style="left:1727.8px;top:429px;height:336px;background:#d9dbdf"></div>
<div class="cb" style="left:83px;top:389px"></div>
<div class="t" style="top:396px;font-size:14.8px;color:#1c2b33;font-weight:700;left:135.17px;transform:scaleX(1.0592);transform-origin:0 0;">De...</div>
<svg style="left:182.0px;top:395.2px" width="14.6" height="12.6" viewBox="0 0 14.6 12.6" fill="none" stroke="#35444e" stroke-width="1.6" stroke-linecap="round" stroke-linejoin="round"><path d="M3.9 11.8V1.1M.9 4.1L3.9 1L6.9 4.1"/><path d="M10.7 .8V11.5M7.7 8.5L10.7 11.6L13.7 8.5"/></svg>
<div class="t" style="top:396px;font-size:14.8px;color:#1c2b33;font-weight:700;left:237.81px;transform:scaleX(0.9856);transform-origin:0 0;">conjunto de anúncios</div>
<svg style="left:395.0px;top:395.2px" width="14.6" height="12.6" viewBox="0 0 14.6 12.6" fill="none" stroke="#35444e" stroke-width="1.6" stroke-linecap="round" stroke-linejoin="round"><path d="M3.9 11.8V1.1M.9 4.1L3.9 1L6.9 4.1"/><path d="M10.7 .8V11.5M7.7 8.5L10.7 11.6L13.7 8.5"/></svg>
<svg style="left:597.6px;top:398.3px" width="9.4" height="5.6" viewBox="0 0 12 7"><path d="M1.2 0.4 H10.8 C11.6 0.4 11.9 1.1 11.4 1.7 L6.8 6.3 C6.4 6.8 5.6 6.8 5.2 6.3 L0.6 1.7 C0.1 1.1 0.4 0.4 1.2 0.4Z" fill="#1c2b33"/></svg>
<div class="t" style="top:396px;font-size:14.8px;color:#0a78be;font-weight:700;left:627.70px;transform:scaleX(0.9935);transform-origin:0 0;">Veiculação</div>
<svg style="left:712px;top:394.5px" width="12" height="14" viewBox="0 0 12 14" fill="none" stroke="#35444e" stroke-width="1.5" stroke-linecap="round" stroke-linejoin="round"><path d="M6 13V1.2M1.6 5.6L6 1.2L10.4 5.6"/></svg>
<svg style="left:741.0px;top:398.3px" width="9.4" height="5.6" viewBox="0 0 12 7"><path d="M1.2 0.4 H10.8 C11.6 0.4 11.9 1.1 11.4 1.7 L6.8 6.3 C6.4 6.8 5.6 6.8 5.2 6.3 L0.6 1.7 C0.1 1.1 0.4 0.4 1.2 0.4Z" fill="#1c2b33"/></svg>
<div class="t" style="top:396px;font-size:14.8px;color:#1c2b33;font-weight:700;left:770.82px;transform:scaleX(0.9680);transform-origin:0 0;">Ações</div>
<svg style="left:916.4px;top:398.3px" width="9.4" height="5.6" viewBox="0 0 12 7"><path d="M1.2 0.4 H10.8 C11.6 0.4 11.9 1.1 11.4 1.7 L6.8 6.3 C6.4 6.8 5.6 6.8 5.2 6.3 L0.6 1.7 C0.1 1.1 0.4 0.4 1.2 0.4Z" fill="#1c2b33"/></svg>
<div class="t" style="top:396px;font-size:14.8px;color:#1c2b33;font-weight:700;left:955.80px;">Resultados</div>
<svg style="left:1042.0px;top:395.2px" width="14.6" height="12.6" viewBox="0 0 14.6 12.6" fill="none" stroke="#35444e" stroke-width="1.6" stroke-linecap="round" stroke-linejoin="round"><path d="M3.9 11.8V1.1M.9 4.1L3.9 1L6.9 4.1"/><path d="M10.7 .8V11.5M7.7 8.5L10.7 11.6L13.7 8.5"/></svg>
<svg style="left:1078.0px;top:398.3px" width="9.4" height="5.6" viewBox="0 0 12 7"><path d="M1.2 0.4 H10.8 C11.6 0.4 11.9 1.1 11.4 1.7 L6.8 6.3 C6.4 6.8 5.6 6.8 5.2 6.3 L0.6 1.7 C0.1 1.1 0.4 0.4 1.2 0.4Z" fill="#1c2b33"/></svg>
<div class="t" style="top:387px;font-size:14.8px;color:#1c2b33;font-weight:700;left:1107.80px;transform:scaleX(0.9946);transform-origin:0 0;">Custo por</div>
<div class="t" style="top:407px;font-size:14.8px;color:#1c2b33;font-weight:700;left:1107.80px;transform:scaleX(1.0074);transform-origin:0 0;">resultado</div>
<svg style="left:1212.0px;top:395.2px" width="14.6" height="12.6" viewBox="0 0 14.6 12.6" fill="none" stroke="#35444e" stroke-width="1.6" stroke-linecap="round" stroke-linejoin="round"><path d="M3.9 11.8V1.1M.9 4.1L3.9 1L6.9 4.1"/><path d="M10.7 .8V11.5M7.7 8.5L10.7 11.6L13.7 8.5"/></svg>
<svg style="left:1238.6px;top:398.3px" width="9.4" height="5.6" viewBox="0 0 12 7"><path d="M1.2 0.4 H10.8 C11.6 0.4 11.9 1.1 11.4 1.7 L6.8 6.3 C6.4 6.8 5.6 6.8 5.2 6.3 L0.6 1.7 C0.1 1.1 0.4 0.4 1.2 0.4Z" fill="#1c2b33"/></svg>
<div class="t" style="top:396px;font-size:14.8px;color:#1c2b33;font-weight:700;left:1268.09px;transform:scaleX(1.0202);transform-origin:0 0;">Orçamento</div>
<svg style="left:1354.0px;top:395.2px" width="14.6" height="12.6" viewBox="0 0 14.6 12.6" fill="none" stroke="#35444e" stroke-width="1.6" stroke-linecap="round" stroke-linejoin="round"><path d="M3.9 11.8V1.1M.9 4.1L3.9 1L6.9 4.1"/><path d="M10.7 .8V11.5M7.7 8.5L10.7 11.6L13.7 8.5"/></svg>
<svg style="left:1385.6px;top:398.3px" width="9.4" height="5.6" viewBox="0 0 12 7"><path d="M1.2 0.4 H10.8 C11.6 0.4 11.9 1.1 11.4 1.7 L6.8 6.3 C6.4 6.8 5.6 6.8 5.2 6.3 L0.6 1.7 C0.1 1.1 0.4 0.4 1.2 0.4Z" fill="#1c2b33"/></svg>
<div class="t" style="top:396px;font-size:14.8px;color:#1c2b33;font-weight:700;left:1415.51px;transform:scaleX(0.9822);transform-origin:0 0;">Valor usado</div>
<svg style="left:1504.6px;top:395.2px" width="14.6" height="12.6" viewBox="0 0 14.6 12.6" fill="none" stroke="#35444e" stroke-width="1.6" stroke-linecap="round" stroke-linejoin="round"><path d="M3.9 11.8V1.1M.9 4.1L3.9 1L6.9 4.1"/><path d="M10.7 .8V11.5M7.7 8.5L10.7 11.6L13.7 8.5"/></svg>
<svg style="left:1549.8px;top:398.3px" width="9.4" height="5.6" viewBox="0 0 12 7"><path d="M1.2 0.4 H10.8 C11.6 0.4 11.9 1.1 11.4 1.7 L6.8 6.3 C6.4 6.8 5.6 6.8 5.2 6.3 L0.6 1.7 C0.1 1.1 0.4 0.4 1.2 0.4Z" fill="#1c2b33"/></svg>
<div class="t" style="top:396px;font-size:14.8px;color:#1c2b33;font-weight:700;left:1580.01px;transform:scaleX(0.9872);transform-origin:0 0;">Impressões</div>
<svg style="left:1667.0px;top:395.2px" width="14.6" height="12.6" viewBox="0 0 14.6 12.6" fill="none" stroke="#35444e" stroke-width="1.6" stroke-linecap="round" stroke-linejoin="round"><path d="M3.9 11.8V1.1M.9 4.1L3.9 1L6.9 4.1"/><path d="M10.7 .8V11.5M7.7 8.5L10.7 11.6L13.7 8.5"/></svg>
<svg style="left:1710.6px;top:398.3px" width="9.4" height="5.6" viewBox="0 0 12 7"><path d="M1.2 0.4 H10.8 C11.6 0.4 11.9 1.1 11.4 1.7 L6.8 6.3 C6.4 6.8 5.6 6.8 5.2 6.3 L0.6 1.7 C0.1 1.1 0.4 0.4 1.2 0.4Z" fill="#1c2b33"/></svg>
<div class="t" style="top:396px;font-size:14.8px;color:#1c2b33;font-weight:700;left:1739.81px;transform:scaleX(0.9812);transform-origin:0 0;">Alcance</div>
<svg style="left:1802.0px;top:395.2px" width="14.6" height="12.6" viewBox="0 0 14.6 12.6" fill="none" stroke="#35444e" stroke-width="1.6" stroke-linecap="round" stroke-linejoin="round"><path d="M3.9 11.8V1.1M.9 4.1L3.9 1L6.9 4.1"/><path d="M10.7 .8V11.5M7.7 8.5L10.7 11.6L13.7 8.5"/></svg>
<div class="cb" style="left:83px;top:441.0px;height:26px"></div>
<div class="abs" style="left:154px;top:442.0px;width:41px;height:24px;border-radius:12px;background:#deeaf4;border:1px solid #c9d1da"></div>
<div class="abs" style="left:172.6px;top:442.8px;width:22.4px;height:22.4px;border-radius:12px;background:#0a78be"></div>
<div class="t" style="top:437px;font-size:15.5px;color:#1d66cf;left:236.20px;transform:scaleX(0.9949);transform-origin:0 0;">Vem me conhecer</div>
<div class="abs" style="left:626px;top:438.1px;width:13px;height:13px;border-radius:7px;border:2px solid #0a6b4f"></div>
<div class="t" style="top:437px;font-size:15.5px;color:#1c2b33;left:647.50px;transform:scaleX(0.9920);transform-origin:0 0;">Em rascunho</div>
<div class="abs" style="left:1072.6px;top:443.9px;width:13px;height:1.4px;background:#26353f"></div>
<div class="abs" style="left:1233.6px;top:443.9px;width:13px;height:1.4px;background:#26353f"></div>
<div class="t" style="top:436px;font-size:16.2px;color:#1c2b33;right:525.30px;transform:scaleX(0.9817);transform-origin:100% 0;">R$ 10,00</div>
<div class="t" style="top:460px;font-size:13.4px;color:#6d7982;right:525.30px;">Diário</div>
<div class="abs" style="left:1545.5px;top:443.9px;width:13px;height:1.4px;background:#26353f"></div>
<div class="abs" style="left:1705.3px;top:443.9px;width:13px;height:1.4px;background:#26353f"></div>
<div class="cb" style="left:83px;top:491.3px;height:26px"></div>
<div class="abs" style="left:154px;top:492.3px;width:41px;height:24px;border-radius:12px;background:#deeaf4;border:1px solid #c9d1da"></div>
<div class="abs" style="left:172.6px;top:493.1px;width:22.4px;height:22.4px;border-radius:12px;background:#0a78be"></div>
<div class="t" style="top:487px;font-size:15.5px;color:#1d66cf;left:236.17px;transform:scaleX(1.0583);transform-origin:0 0;">00 - [Aberto] [Auto] [F] Advantaged</div>
<div class="abs" style="left:626px;top:487.9px;width:13px;height:13px;border-radius:7px;background:#c8cdd6"></div>
<div class="abs" style="left:640px;top:483.0px;width:110px;height:30px;overflow:hidden"><div class="t" style="top:4px;font-size:15.5px;color:#1c2b33;left:7.50px;">Campanha desativada</div></div>
<div class="abs" style="left:769.5px;top:493.7px;width:13px;height:1.4px;background:#26353f"></div>
<div class="t" style="top:486px;font-size:16.2px;color:#1c2b33;right:837.20px;border-bottom:1.5px dotted #26353f;padding-bottom:1px;">2.635</div>
<div class="t" style="top:510px;font-size:13.4px;color:#6d7982;right:837.20px;transform:scaleX(0.9928);transform-origin:100% 0;">Compras no site</div>
<div class="t" style="top:486px;font-size:16.2px;color:#1c2b33;right:677.00px;transform:scaleX(0.9576);transform-origin:100% 0;border-bottom:1.5px dotted #26353f;padding-bottom:1px;">R$ 8,67</div>
<div class="t" style="top:510px;font-size:13.4px;color:#6d7982;right:677.00px;">Por compra</div>
<div class="t" style="top:486px;font-size:16.2px;color:#1c2b33;right:525.30px;transform:scaleX(0.9772);transform-origin:100% 0;">R$ 100,00</div>
<div class="t" style="top:510px;font-size:13.4px;color:#6d7982;right:525.30px;">Diário</div>
<div class="t" style="top:486px;font-size:16.2px;color:#1c2b33;right:361.20px;transform:scaleX(0.9936);transform-origin:100% 0;">R$ 22.854,04</div>
<div class="t" style="top:486px;font-size:16.2px;color:#1c2b33;right:200.60px;transform:scaleX(0.9331);transform-origin:100% 0;">3.142.410</div>
<div class="abs" style="left:1800px;top:483.0px;width:62px;height:30px;overflow:hidden"><div class="t" style="top:3px;font-size:16.2px;color:#1c2b33;left:23.53px;transform:scaleX(0.9428);transform-origin:0 0;">407.2</div></div>
<div class="cb" style="left:83px;top:542.3px;height:26px"></div>
<div class="abs" style="left:154px;top:543.3px;width:41px;height:24px;border-radius:12px;background:#deeaf4;border:1px solid #c9d1da"></div>
<div class="abs" style="left:172.6px;top:544.1px;width:22.4px;height:22.4px;border-radius:12px;background:#0a78be"></div>
<div class="t" style="top:538px;font-size:15.5px;color:#1d66cf;left:236.19px;transform:scaleX(1.0275);transform-origin:0 0;">00 - [Quente] [Auto] [Q] Envolvimento + Pageview...</div>
<div class="abs" style="left:626px;top:539.0px;width:13px;height:13px;border-radius:7px;background:#c8cdd6"></div>
<div class="abs" style="left:640px;top:534.0px;width:110px;height:30px;overflow:hidden"><div class="t" style="top:4px;font-size:15.5px;color:#1c2b33;left:7.50px;">Campanha desativada</div></div>
<div class="abs" style="left:769.5px;top:544.8px;width:13px;height:1.4px;background:#26353f"></div>
<div class="t" style="top:537px;font-size:16.2px;color:#1c2b33;right:837.20px;transform:scaleX(0.9503);transform-origin:100% 0;border-bottom:1.5px dotted #26353f;padding-bottom:1px;">1.642</div>
<div class="t" style="top:561px;font-size:13.4px;color:#6d7982;right:837.20px;transform:scaleX(0.9928);transform-origin:100% 0;">Compras no site</div>
<div class="t" style="top:537px;font-size:16.2px;color:#1c2b33;right:677.00px;transform:scaleX(0.9276);transform-origin:100% 0;border-bottom:1.5px dotted #26353f;padding-bottom:1px;">R$ 7,95</div>
<div class="t" style="top:561px;font-size:13.4px;color:#6d7982;right:677.00px;">Por compra</div>
<div class="t" style="top:537px;font-size:16.2px;color:#1c2b33;right:525.30px;transform:scaleX(0.9923);transform-origin:100% 0;">R$ 30,00</div>
<div class="t" style="top:561px;font-size:13.4px;color:#6d7982;right:525.30px;">Diário</div>
<div class="t" style="top:537px;font-size:16.2px;color:#1c2b33;right:361.20px;transform:scaleX(0.9648);transform-origin:100% 0;">R$ 13.046,34</div>
<div class="t" style="top:537px;font-size:16.2px;color:#1c2b33;right:200.60px;transform:scaleX(0.9526);transform-origin:100% 0;">1.733.590</div>
<div class="abs" style="left:1800px;top:534.0px;width:62px;height:30px;overflow:hidden"><div class="t" style="top:3px;font-size:16.2px;color:#1c2b33;left:23.53px;transform:scaleX(0.9428);transform-origin:0 0;">155.3</div></div>
<div class="cb" style="left:83px;top:593.3px;height:26px"></div>
<div class="abs" style="left:154px;top:594.3px;width:41px;height:24px;border-radius:12px;background:#fff;border:1px solid #c9d1da"></div>
<div class="abs" style="left:157px;top:597.3px;width:18px;height:18px;border-radius:9px;background:#283943"></div>
<div class="t" style="top:589px;font-size:15.5px;color:#1d66cf;left:236.19px;transform:scaleX(1.0291);transform-origin:0 0;">00 - [Morno] [Auto] [M] Envolvimento + video vie...</div>
<div class="abs" style="left:626px;top:589.9px;width:13px;height:13px;border-radius:7px;background:#c8cdd6"></div>
<div class="t" style="top:589px;font-size:15.5px;color:#1c2b33;left:647.49px;transform:scaleX(1.0226);transform-origin:0 0;">Desativado</div>
<div class="abs" style="left:769.5px;top:595.7px;width:13px;height:1.4px;background:#26353f"></div>
<div class="t" style="top:588px;font-size:16.2px;color:#1c2b33;right:837.20px;transform:scaleX(1.0713);transform-origin:100% 0;border-bottom:1.5px dotted #26353f;padding-bottom:1px;">40</div>
<div class="t" style="top:612px;font-size:13.4px;color:#6d7982;right:844.20px;transform:scaleX(0.9727);transform-origin:100% 0;">Adições ao carrinho ...</div>
<div class="t" style="top:588px;font-size:16.2px;color:#1c2b33;right:677.00px;transform:scaleX(0.9576);transform-origin:100% 0;border-bottom:1.5px dotted #26353f;padding-bottom:1px;">R$ 4,75</div>
<div class="t" style="top:612px;font-size:13.4px;color:#6d7982;right:684.00px;transform:scaleX(0.9712);transform-origin:100% 0;">Por inclusão no carri...</div>
<div class="t" style="top:588px;font-size:16.2px;color:#1c2b33;right:525.30px;transform:scaleX(0.9923);transform-origin:100% 0;">R$ 20,00</div>
<div class="t" style="top:612px;font-size:13.4px;color:#6d7982;right:525.30px;">Diário</div>
<div class="t" style="top:588px;font-size:16.2px;color:#1c2b33;right:361.20px;transform:scaleX(0.9611);transform-origin:100% 0;">R$ 190,09</div>
<div class="t" style="top:588px;font-size:16.2px;color:#1c2b33;right:200.60px;transform:scaleX(0.9290);transform-origin:100% 0;">21.637</div>
<div class="abs" style="left:1800px;top:585.0px;width:62px;height:30px;overflow:hidden"><div class="t" style="top:3px;font-size:16.2px;color:#1c2b33;left:32.94px;transform:scaleX(0.9138);transform-origin:0 0;">16.2</div></div>
<div class="cb" style="left:83px;top:643.3px;height:26px"></div>
<div class="abs" style="left:154px;top:644.3px;width:41px;height:24px;border-radius:12px;background:#fff;border:1px solid #c9d1da"></div>
<div class="abs" style="left:157px;top:647.3px;width:18px;height:18px;border-radius:9px;background:#283943"></div>
<div class="t" style="top:639px;font-size:15.5px;color:#1d66cf;left:236.18px;transform:scaleX(1.0496);transform-origin:0 0;">00 - [Aberto] [Auto] [F] Raio 5km</div>
<div class="abs" style="left:626px;top:640.3px;width:13px;height:13px;border-radius:7px;background:#c8cdd6"></div>
<div class="t" style="top:639px;font-size:15.5px;color:#1c2b33;left:647.49px;transform:scaleX(1.0226);transform-origin:0 0;">Desativado</div>
<div class="abs" style="left:769.5px;top:646.1px;width:13px;height:1.4px;background:#26353f"></div>
<div class="abs" style="left:1072.6px;top:646.1px;width:13px;height:1.4px;background:#26353f"></div>
<div class="t" style="top:662px;font-size:13.4px;color:#6d7982;right:833.40px;">Compra no site</div>
<div class="abs" style="left:1233.6px;top:646.1px;width:13px;height:1.4px;background:#26353f"></div>
<div class="t" style="top:662px;font-size:13.4px;color:#6d7982;right:672.40px;">Por compra</div>
<div class="t" style="top:638px;font-size:16.2px;color:#1c2b33;right:525.30px;transform:scaleX(0.9923);transform-origin:100% 0;">R$ 20,00</div>
<div class="t" style="top:662px;font-size:13.4px;color:#6d7982;right:525.30px;">Diário</div>
<div class="t" style="top:638px;font-size:16.2px;color:#1c2b33;right:361.20px;transform:scaleX(0.9852);transform-origin:100% 0;">R$ 802,22</div>
<div class="t" style="top:638px;font-size:16.2px;color:#1c2b33;right:200.60px;transform:scaleX(0.9492);transform-origin:100% 0;">118.368</div>
<div class="abs" style="left:1800px;top:635.0px;width:62px;height:30px;overflow:hidden"><div class="t" style="top:3px;font-size:16.2px;color:#1c2b33;left:30.10px;">50.0</div></div>
<div class="t" style="top:694px;font-size:15.5px;color:#26353f;left:240.20px;transform:scaleX(1.0075);transform-origin:0 0;">Resultados de 5 conjuntos de anúncios</div>
<svg style="left:517.5px;top:694px" width="13" height="13" viewBox="0 0 13 13"><circle cx="6.5" cy="6.5" r="6.5" fill="#26353f"/><rect x="5.6" y="5.4" width="1.9" height="4.8" fill="#fff"/><circle cx="6.5" cy="3.4" r="1.1" fill="#fff"/></svg>
<div class="abs" style="left:74.5px;top:769px;width:1111px;height:8px;border-radius:4px;background:#c1c1c1"></div>
</body>
</html>
